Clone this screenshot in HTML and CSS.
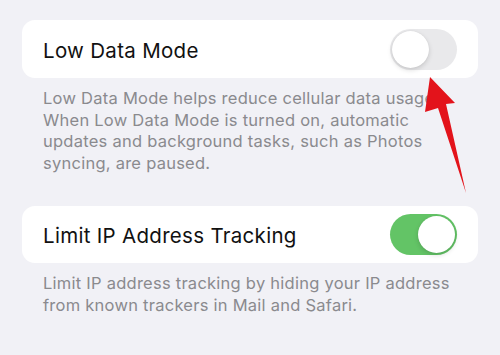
FILE: index.html
```html
<!DOCTYPE html>
<html>
<head>
<meta charset="utf-8">
<link rel="stylesheet" href="styles.css">
</head>
<body>
<main class="page">
  <section class="group">
    <div class="card">
      <span class="label">Low Data Mode</span>
      <span class="toggle"><span class="thumb"></span></span>
    </div>
    <p class="note">Low Data Mode helps reduce cellular data usage.<br>When Low Data Mode is turned on, automatic<br>updates and background tasks, such as Photos<br>syncing, are paused.</p>
  </section>
  <section class="group">
    <div class="card">
      <span class="label">Limit IP Address Tracking</span>
      <span class="toggle on"><span class="thumb"></span></span>
    </div>
    <p class="note">Limit IP address tracking by hiding your IP address<br>from known trackers in Mail and Safari.</p>
  </section>
  <svg class="arrow" width="500" height="355" viewBox="0 0 500 355">
    <polygon points="430,77 455,103 446,104 466,193 438,108 425,112" fill="#e3131b"/>
  </svg>
</main>
</body>
</html>
```
FILE: styles.css
```css
html, body {
  margin: 0;
  padding: 0;
  background: #f1f1f6;
}
.page {
  position: relative;
  width: 500px;
  height: 355px;
  padding: 20px 22px 0;
  box-sizing: border-box;
  font-family: Inter, "Noto Sans", sans-serif;
  display: flex;
  flex-direction: column;
  gap: 32px;
}
.card {
  background: #ffffff;
  border-radius: 13px;
  height: 58px;
  display: flex;
  align-items: center;
  justify-content: space-between;
  padding: 0 21px;
}
.group:last-of-type .card {
  height: 57px;
}
.label {
  font-size: 20.5px;
  color: #111111;
  letter-spacing: 0.3px;
  padding-top: 2px;
}
.toggle {
  width: 67px;
  height: 41px;
  border-radius: 21px;
  background: #e9e9eb;
  display: flex;
  align-items: center;
  padding: 2px;
  box-sizing: border-box;
}
.toggle.on {
  background: #63c466;
  justify-content: flex-end;
}
.thumb {
  width: 37px;
  height: 37px;
  border-radius: 50%;
  background: #ffffff;
  box-shadow: 0 2px 5px rgba(0,0,0,0.15), 0 0 1px rgba(0,0,0,0.1);
}
.note {
  margin: 10px 0 0;
  padding: 0 21px;
  font-size: 16.5px;
  line-height: 21.5px;
  letter-spacing: 0.25px;
  color: #8a8a8e;
}
.arrow {
  position: absolute;
  left: 0;
  top: 0;
  pointer-events: none;
}
```
